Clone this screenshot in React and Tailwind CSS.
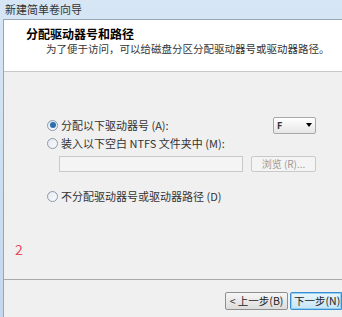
const font = { fontFamily: '"Noto Sans CJK SC", "Noto Sans", sans-serif' };

function Radio({ checked }) {
  return (
    <span className="w-[11px] h-[11px] rounded-full border border-[#8a9aab] bg-gradient-to-br from-[#e4e9ef] to-[#fafbfc] flex items-center justify-center shrink-0">
      {checked && <span className="w-[6px] h-[6px] rounded-full bg-[#2b6fb0]" />}
    </span>
  );
}

export default function App() {
  return (
    <div className="w-[342px] h-[317px] overflow-hidden flex flex-col bg-gradient-to-b from-[#d7e6f5] to-[#c3d8ee] text-[#222]" style={font}>
      <div className="h-[19px] shrink-0 pl-[5px] flex items-center text-[11px] text-[#333] leading-none">
        新建简单卷向导
      </div>
      <div className="flex-1 ml-[3px] border-l border-t border-[#9aa5b1] bg-[#f0f0f0] flex flex-col">
        <div className="h-[52px] bg-white border-b border-[#c8c8c8] pt-[6px] pl-[22px] flex flex-col whitespace-nowrap">
          <div className="text-[12px] font-bold leading-[15px] text-black">分配驱动器号和路径</div>
          <div className="text-[10.5px] leading-[15px] pl-[20px] text-[#333]">为了便于访问，可以给磁盘分区分配驱动器号或驱动器路径。</div>
        </div>
        <div className="h-[207px] flex flex-col text-[11px] leading-none text-[#333]">
          <div className="pt-[44px] pl-[43px] pr-[26px] flex flex-col">
            <div className="flex items-center h-[18px]">
              <Radio checked />
              <span className="ml-[3px]">分配以下驱动器号 (A):</span>
              <div className="ml-auto w-[43px] h-[17px] border border-[#a8a8a8] rounded-[2px] bg-gradient-to-b from-white to-[#e6e6e6] flex items-center px-[3px] text-[9px] font-bold">
                <span>F</span>
                <span className="ml-auto w-0 h-0 border-l-[3px] border-r-[3px] border-t-[4px] border-l-transparent border-r-transparent border-t-black" />
              </div>
            </div>
            <div className="flex items-center h-[18px]">
              <Radio />
              <span className="ml-[3px]">装入以下空白 NTFS 文件夹中 (M):</span>
            </div>
            <div className="flex items-center pl-[12px] mt-[4px] gap-[8px]">
              <div className="w-[184px] h-[16px] border border-[#c9c9c9] bg-[#f4f4f4]" />
              <div className="w-[65px] h-[16px] border border-[#c9c9c9] rounded-[2px] bg-[#f4f4f4] text-[#9a9a9a] flex items-center justify-center text-[10px]">
                浏览 (R)...
              </div>
            </div>
            <div className="flex items-center h-[18px] mt-[15px]">
              <Radio />
              <span className="ml-[3px]">不分配驱动器号或驱动器路径 (D)</span>
            </div>
          </div>
          <div className="pl-[11px] mt-[37px] text-[14px] text-[#e84a5a]">2</div>
        </div>
        <div className="border-t border-[#a9a9a9] flex-1 flex justify-end items-start pt-[12px] gap-[2px] text-[10.5px] leading-none whitespace-nowrap">
          <div className="w-[63px] h-[18px] border border-[#8f8f8f] rounded-[2px] bg-gradient-to-b from-[#f6f6f6] to-[#dcdcdc] flex items-center justify-center">
            &lt; 上一步(B)
          </div>
          <div className="w-[52px] h-[18px] border border-[#3c8fd0] rounded-l-[2px] bg-gradient-to-b from-[#eaf6fd] to-[#c4e5f6] flex items-center pl-[3px] shadow-[inset_0_0_0_1px_#8fd0f0]">
            下一步(N)
          </div>
        </div>
      </div>
    </div>
  );
}
